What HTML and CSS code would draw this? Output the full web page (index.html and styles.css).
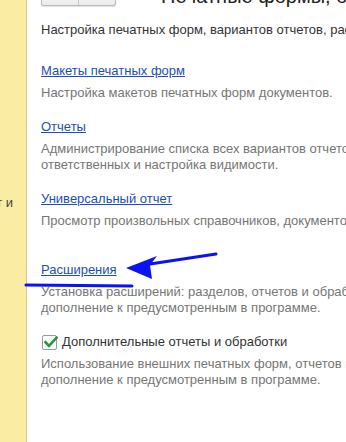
FILE: index.html
```html
<!DOCTYPE html>
<html>
  <head>
    <title>Печатные формы, отчеты и обработки</title>
    <meta name="viewport" content="width=device-width, initial-scale=1.0">
    <link rel="stylesheet" href="styles.css">
  </head>
  <body>
    <div class="page">
      <div class="side-panel">
        <span class="side-text">ют и</span>
      </div>
      <div class="content">
        <div class="header">
          <div class="button-group">
            <span class="btn"></span>
            <span class="btn"></span>
          </div>
          <h1 class="title">Печатные формы, отчеты и обработки</h1>
        </div>
        <p class="intro">Настройка печатных форм, вариантов отчетов, расширений и дополнительных обработок.</p>

        <div class="item item-first">
          <a class="item-link" href="#">Макеты печатных форм</a>
          <p class="item-desc">Настройка макетов печатных форм документов.</p>
        </div>

        <div class="item">
          <a class="item-link" href="#">Отчеты</a>
          <p class="item-desc">Администрирование списка всех вариантов отчетов программы,<br>ответственных и настройка видимости.</p>
        </div>

        <div class="item">
          <a class="item-link" href="#">Универсальный отчет</a>
          <p class="item-desc">Просмотр произвольных справочников, документов и регистров.</p>
        </div>

        <div class="item item-spaced">
          <a class="item-link" href="#">Расширения</a>
          <p class="item-desc">Установка расширений: разделов, отчетов и обработок в<br>дополнение к предусмотренным в программе.</p>
        </div>

        <div class="item">
          <label class="check-row">
            <span class="checkbox">
              <svg width="14" height="12" viewBox="0 0 14 12">
                <path d="M1.5 6.2 L5 9.8 L12.6 1.6" fill="none" stroke="#1f9b3e" stroke-width="2.6" stroke-linecap="square"/>
              </svg>
            </span>
            Дополнительные отчеты и обработки
          </label>
          <p class="item-desc">Использование внешних печатных форм, отчетов и обработок в<br>дополнение к предусмотренным в программе.</p>
        </div>
      </div>
    </div>

    <!-- пометки поверх скриншота -->
    <svg class="marks" width="346" height="442" viewBox="0 0 346 442">
      <path d="M216 254 L150 264" stroke="#0a14f0" stroke-width="3" stroke-linecap="round" fill="none"/>
      <path d="M126 268 L157 256 L150 265 L152 279 Z" fill="#0a14f0"/>
      <path d="M26 285 L132 286" stroke="#0a14f0" stroke-width="3" stroke-linecap="round" fill="none"/>
    </svg>
  </body>
</html>
```

FILE: styles.css
```css
body {
  margin: 0;
  background-color: #fff;
  font-family: "Liberation Sans", Arial, sans-serif;
  font-size: 13px;
  color: #333;
}

.page {
  display: flex;
  height: 442px;
  overflow: hidden;
}

.side-panel {
  width: 27px;
  flex-shrink: 0;
  background-color: #fbeca3;
  border-right: 1px solid #d8c888;
  display: flex;
  justify-content: flex-end;
  padding-top: 195px;
  box-sizing: border-box;
  overflow: hidden;
}

.side-text {
  color: #444;
  margin-right: 13px;
  white-space: nowrap;
}

.content {
  flex-grow: 1;
  padding-left: 14px;
  white-space: nowrap;
  overflow: hidden;
}

.header {
  display: flex;
  align-items: flex-end;
  height: 6px;
}

.button-group {
  display: flex;
  height: 24px;
  flex-shrink: 0;
  align-self: flex-end;
  border: 1px solid #b8b8b8;
  border-top: none;
  border-radius: 0 0 3px 3px;
  background: linear-gradient(#fff, #ececec);
  box-shadow: 0 1px 1px rgba(0, 0, 0, 0.12);
}

.btn {
  width: 36px;
}

.btn + .btn {
  border-left: 1px solid #c8c8c8;
}

.title {
  margin: 0 0 -2px 45px;
  font-size: 20px;
  font-weight: normal;
  color: #222;
  line-height: 24px;
}

.intro {
  margin: 16px 0 0;
  line-height: 16px;
  color: #333;
}

.item {
  margin-top: 18px;
}

.item-first {
  margin-top: 25px;
}

.item-spaced {
  margin-top: 33px;
}

.item-link {
  color: #1d4eb8;
  text-decoration: underline;
  line-height: 16px;
}

.item-desc {
  margin: 6px 0 0;
  line-height: 16px;
  color: #767676;
}

.check-row {
  display: flex;
  align-items: center;
  line-height: 16px;
  color: #333;
  margin-left: 1px;
}

.checkbox {
  width: 13px;
  height: 13px;
  border: 1px solid #9a9a9a;
  border-radius: 2px;
  background: #fff;
  margin-right: 5px;
  position: relative;
}

.checkbox svg {
  position: absolute;
  left: 1px;
  top: 0;
}

.marks {
  position: absolute;
  left: 0;
  top: 0;
  pointer-events: none;
}
```
